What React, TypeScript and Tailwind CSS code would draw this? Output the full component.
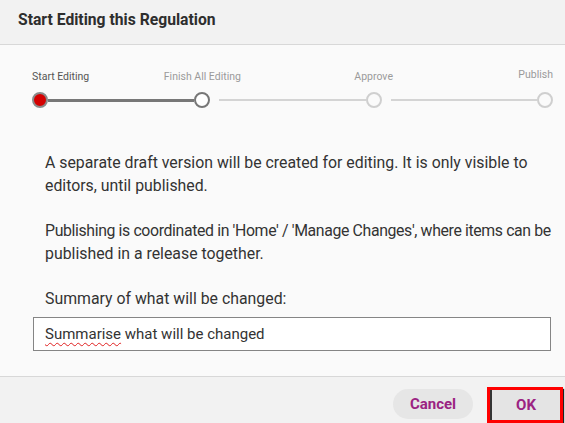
import React from "react";

type Step = { label: string; state: "current" | "next" | "todo"; align: "start" | "center" | "end" };

const steps: Step[] = [
  { label: "Start Editing", state: "current", align: "start" },
  { label: "Finish All Editing", state: "next", align: "center" },
  { label: "Approve", state: "todo", align: "center" },
  { label: "Publish", state: "todo", align: "end" },
];

const Circle = ({ state }: { state: Step["state"] }) => {
  if (state === "current")
    return <div className="h-4 w-4 shrink-0 rounded-full border-[2.5px] border-[#8a8a8a] bg-[#d40000]" />;
  if (state === "next")
    return <div className="h-4 w-4 shrink-0 rounded-full border-[2.5px] border-[#777777] bg-white" />;
  return <div className="h-4 w-4 shrink-0 rounded-full border-[2px] border-[#cfcfcf] bg-[#fafafa]" />;
};

const Stepper = () => {
  return (
    <div className="flex flex-col">
      {/* labels, each hung on a 16px slot above its circle */}
      <div className="flex h-3 items-center">
        {steps.map((s, i) => (
          <React.Fragment key={s.label}>
            {i === 1 && <div className="flex-1" />}
            {i > 1 && <div className="ml-[9px] flex-1" />}
            <div
              className={
                "flex w-4 shrink-0 whitespace-nowrap text-[10.5px] leading-3 " +
                (s.align === "start" ? "justify-start " : s.align === "end" ? "justify-end " : "justify-center ") +
                (s.state === "current" ? "text-[#555555]" : "text-[#9a9a9a]")
              }
            >
              <span className={s.align === "end" ? "-mt-1" : ""}>{s.label}</span>
            </div>
          </React.Fragment>
        ))}
      </div>
      <div className="mt-[9px] flex items-center">
        {steps.map((s, i) => (
          <React.Fragment key={s.label}>
            {i === 1 && <div className="h-[3px] flex-1 bg-[#777777]" />}
            {i > 1 && <div className="ml-[9px] h-[2px] flex-1 bg-[#d4d4d4]" />}
            <Circle state={s.state} />
          </React.Fragment>
        ))}
      </div>
    </div>
  );
};

export default function App() {
  return (
    <div className="flex h-[423px] w-[565px] flex-col overflow-hidden bg-[#fafafa] font-['Roboto',sans-serif] text-[#333333]">
      <div className="flex h-[45px] shrink-0 items-center border-b border-[#d8d8d8] bg-[#f2f2f2] pl-[18px] pb-[4px]">
        <h1 className="text-[15.7px] font-bold text-[#2e2e2e]">Start Editing this Regulation</h1>
      </div>

      <div className="flex shrink-0 flex-col pl-[32px] pr-[12px] pt-[26px] pb-[25px]">
        <Stepper />

        <div className="mt-[43px] -mr-[10px] pl-[13px] text-[15.85px] leading-[23px] whitespace-nowrap">
          <p>
            A separate draft version will be created for editing. It is only visible to
            <br />
            editors, until published.
          </p>
          <p className="mt-[22px]">
            <span className="tracking-[-0.37px]">
              Publishing is coordinated in 'Home' / 'Manage Changes', where items can be
            </span>
            <br />
            published in a release together.
          </p>
          <p className="mt-[22px]">Summary of what will be changed:</p>
        </div>

        <div className="mt-[7px] mr-[2px] ml-[1px] flex h-[34px] items-center border border-[#858585] bg-white px-[11px] text-[15px]">
          <span className="underline decoration-[#e02020] decoration-wavy decoration-1 underline-offset-[3px]">Summarise</span>
          <span>&nbsp;what will be changed</span>
        </div>
      </div>

      <div className="flex flex-1 items-start justify-end gap-[14px] border-t border-[#d8d8d8] bg-[#f2f2f2] pt-[10px] pr-[2px]">
        <button className="mt-[2px] h-[30px] w-[80px] rounded-full bg-[#e6e6e6] text-[15px] font-bold text-[#9b2382]">
          Cancel
        </button>
        <div className="flex h-[36px] w-[76px] border-[3px] border-[#ff0000] shadow-[1px_2px_1px_#222]">
          <button className="flex-1 border-l-2 border-[#333] bg-[#e4e4e4] text-[15px] font-bold text-[#9b2382]">
            OK
          </button>
        </div>
      </div>
    </div>
  );
}
